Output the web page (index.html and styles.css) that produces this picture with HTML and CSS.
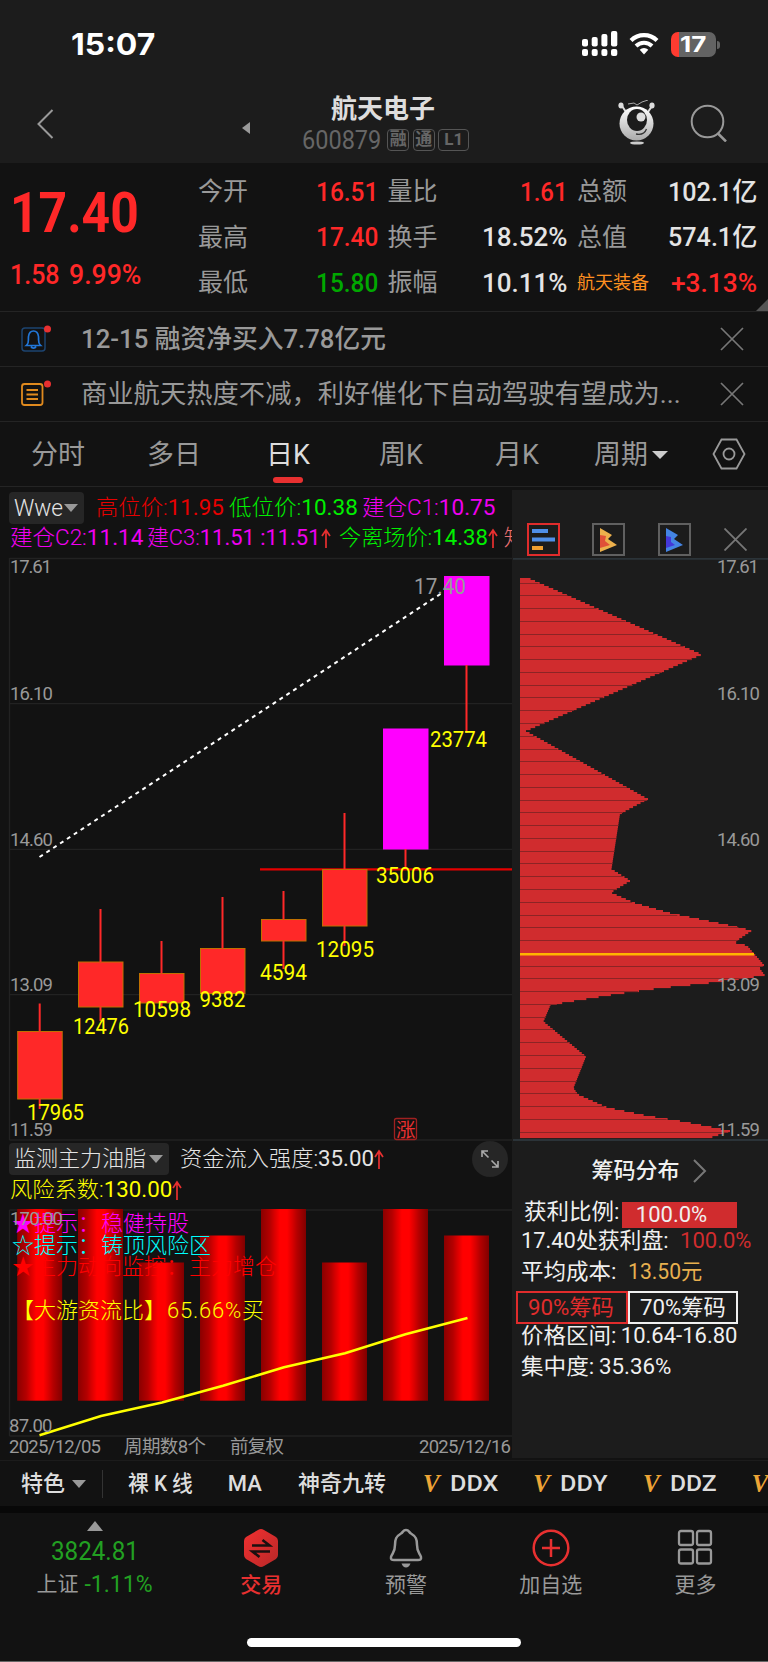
FILE: index.html
```html
<!DOCTYPE html>
<html lang="zh-CN">
<head>
  <meta charset="UTF-8">
  <meta name="viewport" content="width=device-width, initial-scale=1.0">
  <title>航天电子 600879</title>
  <link rel="stylesheet" href="styles.css">
</head>
<body>
  <div class="app">
    <header class="header">
      <div class="status-bar">
        <span class="time" data-w="84">15:07</span>
        <div class="status-icons">
          <svg width="36" height="26" viewBox="0 0 36 26" fill="#fff">
            <rect x="0" y="8" width="6" height="7.5" rx="2"/><rect x="9.7" y="6" width="6" height="9.5" rx="2"/><rect x="19.4" y="3" width="6" height="12.5" rx="2"/><rect x="29" y="0" width="6.3" height="15.5" rx="2"/>
            <rect x="0" y="18" width="6" height="7" rx="2"/><rect x="9.7" y="18" width="6" height="7" rx="2"/><rect x="19.4" y="18" width="6" height="7" rx="2"/><rect x="29" y="18" width="6.3" height="7" rx="2"/>
          </svg>
          <svg class="wifi" width="30" height="24" viewBox="0 0 30 24">
            <path d="M2 8.5a18.5 18.5 0 0 1 26 0" fill="none" stroke="#fff" stroke-width="4.2"/>
            <path d="M7 14a11.5 11.5 0 0 1 16 0" fill="none" stroke="#fff" stroke-width="4"/>
            <path d="M15 22.500l-4.300-4.700a6 6 0 0 1 8.600 0z" fill="#fff"/>
          </svg>
          <div class="battery"><span data-w="26">17</span></div>
        </div>
      </div>
      <div class="title-bar">
        <svg class="back" width="17" height="30" viewBox="0 0 17 30"><path d="M15.500 1L1.500 15l14 14" fill="none" stroke="#999" stroke-width="2"/></svg>
        <svg class="prev" width="8" height="12" viewBox="0 0 8 12"><path d="M8 0v12L0 6z" fill="#999"/></svg>
        <div class="stock">
          <h1>航天电子</h1>
          <div class="code">
            <span class="digits" data-w="79">600879</span>
            <span class="badge">融</span><span class="badge">通</span><span class="badge wide">L1</span>
          </div>
        </div>
        <svg class="robot" width="38" height="46" viewBox="0 0 38 46">
          <defs><linearGradient id="rb" x1="0" y1="0" x2="0" y2="1"><stop offset="0" stop-color="#fff"/><stop offset="1" stop-color="#aaa"/></linearGradient></defs>
          <path d="M4 6l4 6M34 6l-4 6" stroke="#ddd" stroke-width="2"/>
          <path d="M10 4l6-1 3 2 5-3 6-2" fill="none" stroke="#aaa" stroke-width="1"/>
          <ellipse cx="3" cy="5.500" rx="2.600" ry="3" fill="#ddd"/><ellipse cx="34" cy="5.500" rx="2.600" ry="3" fill="#ddd"/>
          <ellipse cx="18.500" cy="23.500" rx="17" ry="17" fill="url(#rb)"/>
          <ellipse cx="19" cy="20" rx="10" ry="11" fill="#1c1c1c"/><circle cx="23" cy="17" r="4.500" fill="#ddd"/>
          <path d="M18 34c5 1 9-1 10.500-5" fill="none" stroke="#333" stroke-width="1.300"/>
          <ellipse cx="19" cy="43" rx="7" ry="1.600" fill="#ccc"/>
        </svg>
        <svg class="search" width="38" height="38" viewBox="0 0 38 38"><circle cx="17.500" cy="17.500" r="15.800" fill="none" stroke="#999" stroke-width="2"/><path d="M28 29.500l8 8" stroke="#999" stroke-width="2.500"/></svg>
      </div>
    </header>

    <section class="quote">
      <div class="price">
        <div class="last" data-w="129">17.40</div>
        <div class="change"><span data-w="50">1.58</span><span data-w="72">9.99%</span></div>
      </div>
      <div class="stats">
        <div class="stat"><label>今开</label><b class="up" data-w="62">16.51</b></div>
        <div class="stat"><label>量比</label><b class="up" data-w="48">1.61</b></div>
        <div class="stat"><label>总额</label><b data-w="89">102.1亿</b></div>
        <div class="stat"><label>最高</label><b class="up" data-w="62">17.40</b></div>
        <div class="stat"><label>换手</label><b data-w="85">18.52%</b></div>
        <div class="stat"><label>总值</label><b data-w="89">574.1亿</b></div>
        <div class="stat"><label>最低</label><b class="down" data-w="62">15.80</b></div>
        <div class="stat"><label>振幅</label><b data-w="85">10.11%</b></div>
        <div class="stat"><label class="sector">航天装备</label><b class="up" data-w="86">+3.13%</b></div>
      </div>
    </section>

    <div class="notice">
      <svg width="34" height="32" viewBox="0 0 34 32" fill="none">
        <rect x="2" y="5" width="23" height="23" rx="3" stroke="#1d4470" stroke-width="1.500"/>
        <path d="M6.500 22.500c3-2.500 1.500-5 2-9 .5-4 2.500-5.500 5-5.500s4.500 1.500 5 5.500c.5 4-1 6.500 2 9zM11 23.500a2.800 2.800 0 0 0 5 0" stroke="#2277d8" stroke-width="1.700"/>
        <circle cx="27.500" cy="6" r="3.500" fill="#e83030"/>
      </svg>
      <p class="strong" data-w="305">12-15 融资净买入7.78亿元</p>
      <svg class="close" width="24" height="24" viewBox="0 0 24 24"><path d="M1 1l22 22M23 1L1 23" stroke="#777" stroke-width="1.700"/></svg>
    </div>
    <div class="notice">
      <svg width="34" height="32" viewBox="0 0 34 32" fill="none">
        <rect x="2" y="6" width="20.500" height="21" rx="2.500" stroke="#e08a1e" stroke-width="1.800"/>
        <path d="M6.500 12h11.500M6.500 16.500h11.500M6.500 21h11.500" stroke="#e08a1e" stroke-width="1.800"/>
        <circle cx="27.500" cy="6" r="3.500" fill="#e83030"/>
      </svg>
      <p data-w="600">商业航天热度不减，利好催化下自动驾驶有望成为...</p>
      <svg class="close" width="24" height="24" viewBox="0 0 24 24"><path d="M1 1l22 22M23 1L1 23" stroke="#777" stroke-width="1.700"/></svg>
    </div>

    <nav class="tabs">
      <span>分时</span><span>多日</span><span class="active">日K</span><span>周K</span><span>月K</span>
      <span class="period">周期<i class="caret"></i></span>
      <svg width="34" height="32" viewBox="0 0 34 32" fill="none" stroke="#999" stroke-width="1.800"><path d="M9.500 1.500h15L32.500 16l-8 14.500h-15L1.500 16z"/><circle cx="17" cy="16" r="5.500"/></svg>
    </nav>

    <main class="main">
      <div class="charts">
        <div class="legend">
          <div class="legend-row">
            <button class="picker wwe"><span data-w="49">Wwe</span><i class="caret"></i></button>
            <span class="red" data-w="128">高位价:<b>11.95</b></span>
            <span class="lime" data-w="129">低位价:<b>10.38</b></span>
            <span class="magenta" data-w="133">建仓C1:<b>10.75</b></span>
          </div>
          <div class="legend-row second">
            <span class="magenta" data-w="133">建仓C2:<b>11.14</b></span>
            <span class="magenta" data-w="173">建C3:<b>11.51 :11.51</b></span>
            <svg class="arrow" width="10" height="20" viewBox="0 0 10 20"><path d="M5 20V2M1 8l4-6 4 6" fill="none" stroke="#e83030" stroke-width="1.700"/></svg>
            <span class="lime" data-w="149">今离场价:<b>14.38</b></span>
            <svg class="arrow" width="10" height="20" viewBox="0 0 10 20"><path d="M5 20V2M1 8l4-6 4 6" fill="none" stroke="#e83030" stroke-width="1.700"/></svg>
            <span class="pink">知</span>
          </div>
        </div>
        <svg class="kline" width="512" height="587" viewBox="0 556 512 587" id="kline">
          <g stroke="#222" fill="none"><path d="M9.500 558.500H512M9.500 703.700H512M9.500 849.300H512M9.500 994.700H512M9.500 1140H512M9.500 558V1140" stroke-width="1.300"/></g>
          <path d="M39.500 857L442 593" stroke="#fff" stroke-width="2" stroke-dasharray="4 4.200"/>
          <path d="M260 869.300H512" stroke="#e60000" stroke-width="2.300"/>
          <g id="candles"></g>
          <g class="axis">
            <text x="10" y="573" textLength="42">17.61</text><text x="10" y="700" textLength="43">16.10</text>
            <text x="10" y="845.500" textLength="43">14.60</text><text x="10" y="991" textLength="43">13.09</text>
            <text x="10" y="1136" textLength="43">11.59</text>
            <text class="high" x="414" y="594" textLength="52" lengthAdjust="spacingAndGlyphs">17.40</text>
          </g>
          <g id="volumes" class="vol"></g>
          <rect x="394.500" y="1118.500" width="22" height="21" rx="2" fill="none" stroke="#a02020" stroke-width="1.300"/>
          <text x="396" y="1136.500" font-size="19.500" fill="#e83030">涨</text>
        </svg>
        <div class="legend lower">
          <div class="legend-row">
            <button class="picker fund"><span data-w="132">监测主力油脂</span><i class="caret"></i></button>
            <span data-w="194">资金流入强度:<b>35.00</b></span>
            <svg class="arrow" width="10" height="20" viewBox="0 0 10 20"><path d="M5 20V2M1 8l4-6 4 6" fill="none" stroke="#e83030" stroke-width="1.700"/></svg>
            <div class="expand"><svg width="20" height="20" viewBox="0 0 20 20" fill="none" stroke="#aaa" stroke-width="1.600"><path d="M2 8V2h6M2 2l6.500 6.500M18 12v6h-6M18 18l-6.500-6.500"/></svg></div>
          </div>
          <div class="legend-row risk">
            <span class="yellow" data-w="162">风险系数:<b>130.00</b></span>
            <svg class="arrow" width="10" height="20" viewBox="0 0 10 20"><path d="M5 20V2M1 8l4-6 4 6" fill="none" stroke="#e83030" stroke-width="1.700"/></svg>
          </div>
        </div>
        <svg class="sub" width="512" height="254" viewBox="0 1206 512 254">
          <defs>
            <linearGradient id="bar">
              <stop offset="0" stop-color="#8a0000"/><stop offset=".2" stop-color="#b40000"/><stop offset=".3" stop-color="#d80000"/><stop offset=".42" stop-color="#ff0000"/>
              <stop offset=".58" stop-color="#ff0000"/><stop offset=".7" stop-color="#d80000"/><stop offset=".8" stop-color="#b40000"/><stop offset="1" stop-color="#800000"/>
            </linearGradient>
          </defs>
          <path d="M9.500 1210H512M9.500 1436H512M9.500 1210V1436" stroke="#222" fill="none" stroke-width="1.300"/>
          <g id="bars"></g>
          <polyline points="39.500,1435.300 101,1416 162,1402.500 223,1385.700 284,1367.300 345,1353.300 405.500,1334.300 467.500,1318" fill="none" stroke="#ff0" stroke-width="2.500"/>
          <g font-size="22" font-weight="300">
            <g fill="#f0f"><text x="12" y="1231">★提示：</text><text x="101" y="1231" textLength="88">稳健持股</text></g>
            <g fill="#0ff"><text x="12" y="1252.500">☆提示：</text><text x="101" y="1252.500" textLength="110">铸顶风险区</text></g>
            <g fill="#f00"><text x="12" y="1274">★主力动向监控：</text><text x="189" y="1274" textLength="88">主力增仓</text></g>
            <text x="12" y="1318" fill="#ff0">【大游资流比】</text><text x="167" y="1318" fill="#ff0" textLength="97">65.66%买</text>
          </g>
          <g class="axis">
            <text x="10" y="1224.700" textLength="53">170.00</text><text x="9" y="1432" textLength="43.500">87.00</text>
            <text x="9" y="1453" textLength="92">2025/12/05</text><text x="124" y="1453" textLength="82">周期数8个</text>
            <text x="230" y="1453" textLength="54">前复权</text><text x="419" y="1453" textLength="92">2025/12/16</text>
          </g>
        </svg>
      </div>

      <aside class="chips">
        <div class="chip-tools">
          <div class="tool on"><svg width="23" height="22" viewBox="0 0 23 22"><path d="M0 0h16v4H0zM0 8.500h23v4H0z" fill="#4f8fe8"/><path d="M0 17h11v4H0z" fill="#f0a030"/></svg></div>
          <div class="tool"><svg width="17" height="24" viewBox="0 0 17 24"><path d="M0 0l12 7-4 4 9 6L0 24z" fill="#ecb04c"/><path d="M0 7l6 1-1 5 5 4-10 3z" fill="#e05038"/></svg></div>
          <div class="tool"><svg width="17" height="24" viewBox="0 0 17 24"><path d="M0 0l12 7-4 4 9 6L0 24z" fill="#4484e4"/><path d="M0 8l5 1v5l4 3-9 3z" fill="#4438d8"/></svg></div>
          <svg width="23" height="23" viewBox="0 0 23 23"><path d="M.5.5l22 22M22.500.5l-22 22" stroke="#777" stroke-width="1.800"/></svg>
        </div>
        <svg class="chip-chart" width="257" height="583" viewBox="511 558 257 583">
          <path d="M512 558.800H768M512 1140H768" stroke="#2b3338" stroke-width="2"/>
          <g id="profile"></g>
          <path d="M519 954.300H753" stroke="#ffb400" stroke-width="2.500"/>
          <g class="axis">
            <text x="716" y="573" textLength="42">17.61</text><text x="716" y="700" textLength="43">16.10</text>
            <text x="716" y="845.500" textLength="43">14.60</text><text x="716" y="991" textLength="43">13.09</text><text x="716" y="1136" textLength="43">11.59</text>
          </g>
        </svg>
        <div class="chip-info">
          <h2>筹码分布<svg width="15" height="26" viewBox="0 0 15 26"><path d="M2 2l11 11L2 24" fill="none" stroke="#777" stroke-width="2"/></svg></h2>
          <div class="info-row profit"><span data-w="95">获利比例:</span><div class="rate"><span data-w="71">100.0%</span></div></div>
          <div class="info-row"><span data-w="148">17.40处获利盘:</span><span class="crimson gap" data-w="71">100.0%</span></div>
          <div class="info-row"><span data-w="95">平均成本:</span><span class="gold gap" data-w="74">13.50元</span></div>
          <div class="range"><div class="on"><span data-w="86">90%筹码</span></div><div><span data-w="86">70%筹码</span></div></div>
          <div class="info-row"><span data-w="95">价格区间:</span><span class="near" data-w="117">10.64-16.80</span></div>
          <div class="info-row"><span data-w="73">集中度:</span><span class="near" data-w="72">35.36%</span></div>
        </div>
      </aside>
    </main>

    <div class="features">
      <span class="kind">特色<i class="caret"></i></span>
      <span class="naked" data-w="65">裸 K 线</span>
      <span class="ma" data-w="34">MA</span>
      <span class="nine">神奇九转</span>
      <span class="dd"><em>V</em><span data-w="48">DDX</span></span>
      <span class="dd"><em>V</em><span data-w="48">DDY</span></span>
      <span class="dd"><em>V</em><span data-w="47">DDZ</span></span>
      <span class="dd"><em>V</em></span>
    </div>

    <footer class="bottom">
      <div class="index">
        <i class="caret up-caret"></i>
        <strong data-w="88">3824.81</strong>
        <div><span>上证</span><b data-w="68">-1.11%</b></div>
      </div>
      <div class="item trade">
        <svg width="36" height="40" viewBox="0 0 36 40"><defs><linearGradient id="tr" x2="1" y2="1"><stop offset="0" stop-color="#f23030"/><stop offset="1" stop-color="#b82828"/></linearGradient></defs>
          <path d="M15 2q3-2 6 0l12 7q2 1.500 2 4v14q0 2.500-2 4l-12 7q-3 2-6 0L3 31q-2-1.500-2-4V13q0-2.500 2-4z" fill="url(#tr)"/><path d="M9 17.500h17.500l-7-5.500M27 23.500H9.500l7 5.500" fill="none" stroke="#1a1010" stroke-width="2.600"/></svg>
        交易
      </div>
      <div class="item alert">
        <svg width="36" height="40" viewBox="0 0 36 40"><path d="M18 2c3 0 3 2.500 5 3.500 5 3 6 6 6 11.500 0 8 3 8 4 12 .5 2.500-1 3-3 3H6c-2 0-3.500-.5-3-3 1-4 4-4 4-12 0-5.500 1-8.500 6-11.500C15 4.500 15 2 18 2z" fill="none" stroke="#999" stroke-width="2.500"/><path d="M13.500 35.500h9q-1.500 4-4.500 4t-4.500-4z" fill="#999"/></svg>
        预警
      </div>
      <div class="item add">
        <svg width="38" height="40" viewBox="0 0 38 40"><g fill="none" stroke="#e83030" stroke-width="2.500"><circle cx="19" cy="20" r="17.300"/><path d="M10 20h18M19 11v18"/></g></svg>
        加自选
      </div>
      <div class="item more">
        <svg width="36" height="40" viewBox="0 0 36 40"><g fill="none" stroke="#999" stroke-width="2.300"><rect x="2" y="3" width="14" height="14" rx="2"/><rect x="20" y="3" width="14" height="14" rx="2"/><rect x="2" y="21.500" width="14" height="14" rx="2"/><rect x="20" y="21.500" width="14" height="14" rx="2"/></g></svg>
        更多
      </div>
    </footer>
    <div class="home"></div>
  </div>
  <script src="script.js"></script>
</body>
</html>
```

FILE: styles.css
```css
* {
  box-sizing: border-box;
  margin: 0;
  padding: 0;
}

body {
  width: 768px;
  background: #121212;
  color: #e4e4e4;
  font-family: Roboto, "Noto Sans CJK SC", sans-serif;
  line-height: 1;
}

svg { display: block; flex-shrink: 0; }
i, em { font-style: normal; }

.app {
  display: flex;
  flex-direction: column;
  width: 768px;
  height: 1662px;
  overflow: hidden;
  border-bottom: 1px solid #666;
}

[data-w] {
  display: inline-block;
  white-space: nowrap;
  transform-origin: left center;
  flex-shrink: 0;
}

.caret {
  display: inline-block;
  border: 7px solid transparent;
  border-top: 8px solid #999;
  border-bottom: 0;
}

/* header */
.header {
  height: 163px;
  background: #1c1c1c;
}

.status-bar {
  display: flex;
  justify-content: space-between;
  height: 88px;
  padding: 0 48px 0 71px;
  align-items: center;
}

.time {
  font-family: Inter, sans-serif;
  font-size: 30px;
  font-weight: 700;
  color: #fff;
}

.status-icons { display: flex; align-items: center; }
.wifi { margin: 0 12px 0 11px; }

.battery {
  position: relative;
  width: 45px;
  height: 25px;
  margin-right: 4px;
  padding: 0 0 0 9px;
  border-radius: 7px;
  background: linear-gradient(90deg, #ff3b30 8px, #636363 8px);
  font: 700 22px/25px Inter, sans-serif;
  color: #fff;
}

.battery::after {
  content: "";
  position: absolute;
  left: 46px;
  top: 9px;
  width: 3px;
  height: 8px;
  border-radius: 0 3px 3px 0;
  background: #636363;
}

.title-bar {
  display: flex;
  align-items: flex-start;
  padding-left: 37px;
}

.back { margin-top: 21px; }
.prev { margin: 34px 0 0 188px; }

.stock {
  width: 168px;
  margin-left: 52px;
  padding-top: 7px;
}

.stock h1 {
  margin-left: 29px;
  font-size: 26px;
  line-height: 28px;
  font-weight: 700;
  color: #ddd;
}

.code {
  display: flex;
  align-items: center;
  height: 32px;
  margin-top: 1px;
  color: #666;
}

.digits { font-size: 25px; margin-right: 6px; }

.badge {
  width: 22px;
  height: 22px;
  margin-right: 3.500px;
  border: 1.500px solid #555;
  border-radius: 4px;
  font-size: 17px;
  line-height: 19px;
  text-align: center;
  font-weight: 700;
}

.badge.wide { width: 31px; margin: 0; }
.robot { margin: 12px 0 0 148px; }
.search { margin: 16px 0 0 34px; }

/* quote */
.quote {
  position: relative;
  display: flex;
  height: 149px;
  border-bottom: 1px solid #242424;
}

.quote::after {
  content: "";
  position: absolute;
  right: 0;
  bottom: 0;
  border-left: 12px solid transparent;
  border-bottom: 12px solid #555;
}

.price {
  width: 198px;
  padding: 22px 0 0 10px;
  color: #ff2828;
}

.last {
  font-size: 56px;
  line-height: 56px;
  font-weight: 700;
}

.change {
  display: flex;
  gap: 9px;
  margin-top: 21px;
  font-size: 27px;
  font-weight: 500;
}

.stats {
  display: grid;
  grid-template-columns: repeat(3, 180px);
  grid-template-rows: repeat(3, 45.500px);
  column-gap: 9.500px;
  padding-top: 6px;
}

.stat {
  display: flex;
  justify-content: space-between;
  align-items: center;
}

.stat label { font-size: 25px; color: #999; }
.stat b { font-size: 26px; font-weight: 500; }
.stat .sector { font-size: 18px; color: #ff9020; }
.up { color: #ff2828; }
.down { color: #00a800; }

/* notices */
.notice {
  display: flex;
  align-items: center;
  height: 55px;
  padding: 0 24px 0 20px;
  border-bottom: 1px solid #242424;
  font-size: 26px;
  color: #999;
}

.notice p { margin-left: 27px; }
.notice .strong { font-weight: 500; }
.close { margin-left: auto; }

.tabs {
  display: flex;
  align-items: center;
  height: 65px;
  padding: 0 0 0 31px;
  border-bottom: 1px solid #242424;
  font-size: 27px;
  color: #999;
}

.tabs span { width: 54px; margin-right: 62px; padding-top: 3px; white-space: nowrap; }
.tabs .active { position: relative; margin-left: 3px; color: #ddd; }

.tabs .active::after {
  content: "";
  position: absolute;
  left: 7px;
  top: 38px;
  width: 30px;
  height: 6px;
  border-radius: 3px;
  background: #e83030;
}

.tabs .active { margin-right: 59px; }
.tabs .period { width: 76px; margin: 0 42px 0 -17px; }
.period .caret { margin-left: 4px; border-width: 8px 8px 0; border-top-color: #ccc; vertical-align: 5px; }

/* charts */
.main { display: flex; height: 973px; }

.charts { width: 511.500px; overflow: hidden; flex-shrink: 0; }

.legend { height: 69px; padding-top: 5px; font-size: 22px; font-weight: 300; }
.legend b { font-weight: 400; }

.legend-row { display: flex; align-items: center; height: 32px; }
.legend-row > .magenta { margin-left: 4px; }
.legend-row > .lime { margin-left: 5px; }
.legend-row.second { margin-top: -2px; padding-left: 6px; }
.second > .lime { margin-left: 8px; }
.second .pink { margin-left: 6px; color: #e87070; }

.picker {
  display: flex;
  align-items: center;
  justify-content: space-between;
  height: 32px;
  margin-left: 9px;
  padding: 0 6px 0 5px;
  border: 0;
  border-radius: 4px;
  background: #262626;
  color: #e4e4e4;
  font: inherit;
}

.wwe { width: 75px; margin-right: 12px; font-size: 24px; }
.fund { width: 160px; margin-right: 11px; }

.red { color: #e80000; }
.lime { color: #00f000; }
.magenta { color: #f000f0; }
.yellow { color: #ff0; }

svg text { font-family: Roboto, "Noto Sans CJK SC", sans-serif; }
.axis text { font-size: 18.500px; fill: #999; }
.axis .high { font-size: 22.500px; }
.vol text { font-size: 22px; fill: #ff0; }

.lower { height: 63px; padding-top: 0; }
.risk { padding-left: 10px; height: 30px; }

.expand {
  display: flex;
  align-items: center;
  justify-content: center;
  width: 36px;
  height: 36px;
  margin-left: auto;
  margin-right: 4px;
  border-radius: 50%;
  background: #262626;
}

.chips {
  width: 256.500px;
  height: 968px;
  margin-top: 3px;
  background: #1c1c1c;
}

.chip-tools {
  display: flex;
  align-items: flex-end;
  justify-content: space-between;
  height: 68px;
  padding: 0 21px 2px 15px;
}

.tool {
  display: flex;
  align-items: center;
  justify-content: center;
  width: 33px;
  height: 33px;
  border: 2px solid #606060;
}

.tool.on { border-color: #e02c2c; }
.chip-tools > svg { margin-bottom: 5px; }

.chip-info { padding: 16px 0 0 9px; font-size: 22px; color: #f0f0f0; }

.chip-info h2 {
  display: flex;
  align-items: center;
  gap: 12px;
  height: 28px;
  margin: 0 0 12px 71px;
  font-size: 22px;
  font-weight: 500;
}

.info-row { display: flex; align-items: center; height: 30.500px; }
.profit { height: 29px; padding-left: 3px; }

.rate {
  width: 115px;
  height: 26px;
  margin: 7px 0 0 3px;
  padding-left: 14px;
  line-height: 26px;
  background: #d02c2e;
}

.gap { margin-left: 12px; }
.near { margin-left: 5px; }
.crimson { color: #d02c2e; }
.gold { color: #e8b04f; }

.range { display: flex; margin: 4px 0 -3px -5px; }

.range div {
  width: 110px;
  height: 33px;
  padding-left: 10px;
  border: 2px solid #f0f0f0;
  line-height: 29px;
}

.range .on { width: 112px; border-color: #e02c2c; color: #e02c2c; }

/* feature strip */
.features {
  display: flex;
  align-items: center;
  height: 46px;
  flex-shrink: 0;
  padding: 1px 0 0 21px;
  border-top: 1px solid #1c1c1c;
  font-size: 22px;
  font-weight: 500;
  color: #ddd;
}

.features span { flex-shrink: 0; white-space: nowrap; }

.kind {
  display: flex;
  align-items: center;
  justify-content: space-between;
  width: 82px;
  height: 28px;
  padding-right: 16px;
  border-right: 1px solid #333;
}

.naked { margin-left: 25px; }
.ma { margin-left: 35px; }
.nine { margin: 0 0 0 36px; }

.dd { display: flex; align-items: center; margin-left: 37px; }
.dd em {
  width: 27px;
  font: italic 700 25px/26px "Liberation Serif", serif;
  color: #eda536;
}
.dd + .dd { margin-left: 35px; }

/* bottom navigation */
.bottom {
  display: flex;
  height: 126px;
  flex-shrink: 0;
  border-top: 7px solid #080808;
  font-size: 21px;
  color: #999;
}

.index {
  display: flex;
  flex-direction: column;
  align-items: center;
  width: 189px;
  padding-top: 8px;
  color: #22a022;
}

.up-caret {
  border: 8px solid transparent;
  border-bottom: 10px solid #999;
  border-top: 0;
}

.index strong { margin-top: 8px; font-size: 25px; font-weight: 400; line-height: 26px; }
.index div { display: flex; align-items: center; gap: 6px; margin-top: 8px; }
.index div span { color: #999; }
.index b { font-size: 23px; font-weight: 400; }

.item {
  display: flex;
  flex-direction: column;
  align-items: center;
  width: 144.700px;
  gap: 7px;
  padding-top: 15px;
}

.trade { color: #e83030; font-weight: 500; }

.home {
  width: 274px;
  height: 9px;
  margin: 6px auto 0;
  border-radius: 5px;
  background: #fff;
}
```

FILE: script.js
```javascript
document.querySelectorAll('[data-w]').forEach(el => {
  const w = Number(el.dataset.w);
  const natural = el.offsetWidth;
  el.style.transform = `scaleX(${w / natural})`;
  el.style.marginRight = (parseFloat(getComputedStyle(el).marginRight) + w - natural) + 'px';
});

// [centre, high, top, bottom, low]
const candles = [
  [39.7, 1003.5, 1031.5, 1099, 1109],
  [100.5, 909, 962, 1007, 1021],
  [161.5, 941, 973.5, 1003, 1007],
  [222.5, 897, 948.5, 993.5, 993.5],
  [283.5, 891, 919.5, 941, 969],
  [344.5, 813, 869.5, 926, 946],
  [405.5, 729, 729, 849, 868],
  [466.5, 576.5, 576.5, 665, 733]
];

document.getElementById('candles').innerHTML = candles.map(([x, high, top, bottom, low], i) => {
  const strong = i > 5;
  return `<rect x="${x - 22}" y="${top}" width="44.500" height="${bottom - top}" fill="${strong ? '#f0f' : '#ff2828'}" stroke="${strong ? '#f0f' : '#c07000'}" stroke-width="1"/>
    <path d="M${x} ${high}V${top}M${x} ${bottom}V${low}" stroke="#ff2828" stroke-width="2"/>`;
}).join('');

const volumes = [
  [27, 1120, 57, 17965], [73, 1034, 56, 12476], [133, 1017, 58, 10598], [199.500, 1006.500, 46, 9382],
  [260, 980, 47, 4594], [316, 957, 58, 12095], [376, 883, 58, 35006], [430, 746.500, 57, 23774]
];

document.getElementById('volumes').innerHTML = volumes.map(([x, y, w, n]) =>
  `<text x="${x}" y="${y}" textLength="${w}" lengthAdjust="spacingAndGlyphs">${n}</text>`).join('');

const tops = [1209, 1209, 1262.500, 1235.500, 1209, 1262.500, 1209, 1235.500];

document.getElementById('bars').innerHTML = tops.map((y, i) =>
  `<rect x="${candles[i][0] - 22.500}" y="${y}" width="45" height="${1400.700 - y}" fill="url(#bar)"/>`).join('');

// cost distribution outline, drawn as thin stacked bars
const outline = [
  [525, 577], [701, 654.5], [525, 731], [647, 799], [619, 814], [610.5, 869], [629.5, 880.7], [610, 892.5],
  [634, 903], [669, 913], [732, 926], [751, 930.5], [733, 942.5], [746, 945.5], [763, 965], [758, 967.5],
  [764, 975.5], [704, 983.5], [660, 988], [616, 994], [570, 1001.5], [549.5, 1005], [542.5, 1021.5],
  [585, 1056.5], [572.5, 1088], [577, 1094.5], [606.5, 1107.5], [645, 1115.5], [682, 1121.5],
  [713, 1127.5], [729, 1131], [707, 1138.5]
];

function widthAt(y) {
  for (let i = 1; i < outline.length; i++) {
    const [x0, y0] = outline[i - 1];
    const [x1, y1] = outline[i];
    if (y <= y1) return x0 + (x1 - x0) * (y - y0) / (y1 - y0) - 519;
  }
  return 188;
}

let profile = '';
for (let y = 578; y < 1138; y += 2) {
  profile += `<rect x="519" y="${y}" width="${widthAt(y + 1)}" height="2.100" fill="#d02c2e"/>`;
}
for (let y = 582.5; y < 1138; y += 12.77) {
  profile += `<rect x="519" y="${Math.round(y)}" width="${widthAt(y)}" height="1" fill="#8c2425"/>`;
}
document.getElementById('profile').innerHTML = profile;
```
